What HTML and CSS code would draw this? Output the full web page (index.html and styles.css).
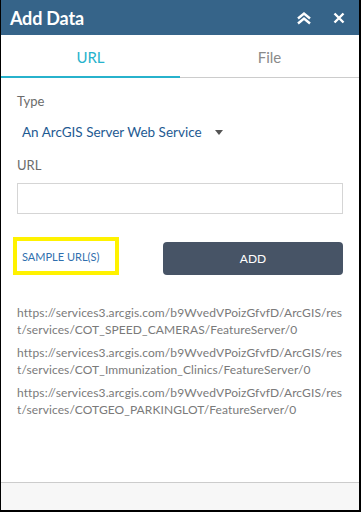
FILE: index.html
```html
<!DOCTYPE html>
<html>
<head>
<meta charset="utf-8">
<link rel="stylesheet" href="styles.css">
</head>
<body>
<div class="panel">
  <div class="header">
    <div class="title">Add Data</div>
    <div class="actions">
      <svg class="ico" width="16" height="14" viewBox="0 0 16 14"><path d="M2 7.5 L8 2.5 L14 7.5 M2 12.5 L8 7.5 L14 12.5" fill="none" stroke="#fff" stroke-width="2.4"/></svg>
      <svg class="ico" width="12" height="12" viewBox="0 0 12 12"><path d="M1.5 1.5 L10.5 10.5 M10.5 1.5 L1.5 10.5" fill="none" stroke="#fff" stroke-width="2.4"/></svg>
    </div>
  </div>
  <div class="tabs">
    <div class="tab active">URL</div>
    <div class="tab">File</div>
  </div>
  <div class="content">
    <div class="label">Type</div>
    <div class="select">An ArcGIS Server Web Service <span class="caret"></span></div>
    <div class="label">URL</div>
    <div class="input"></div>
    <div class="buttons">
      <div class="sample">SAMPLE URL(S)</div>
      <div class="add">ADD</div>
    </div>
    <div class="urls">
      <div class="url">https://services3.arcgis.com/b9WvedVPoizGfvfD/ArcGIS/rest/services/COT_SPEED_CAMERAS/FeatureServer/0</div>
      <div class="url">https://services3.arcgis.com/b9WvedVPoizGfvfD/ArcGIS/rest/services/COT_Immunization_Clinics/FeatureServer/0</div>
      <div class="url">https://services3.arcgis.com/b9WvedVPoizGfvfD/ArcGIS/rest/services/COTGEO_PARKINGLOT/FeatureServer/0</div>
    </div>
  </div>
  <div class="footer"></div>
</div>
</body>
</html>
```
FILE: styles.css
```css
* { box-sizing: border-box; }
html, body { margin: 0; padding: 0; background: #fff; }
body { font-family: Lato, "Open Sans", sans-serif; }
.panel {
  width: 361px; height: 512px;
  border-left: 1px solid #000; border-right: 2px solid #000; border-bottom: 2px solid #000;
  display: flex; flex-direction: column;
}
.header {
  height: 35px; background: #366489; color: #fff;
  display: flex; align-items: center; justify-content: space-between;
  padding: 0 14px 0 9px;
}
.title { font-size: 18px; font-weight: 700; letter-spacing: -0.2px; }
.actions { display: flex; align-items: center; gap: 21px; }
.ico { display: block; }
.tabs { display: flex; height: 43px; }
.tab {
  flex: 1; display: flex; align-items: center; justify-content: center;
  font-size: 15px; color: #8a8a8a; border-bottom: 1px solid #ccc; padding-top: 2px;
}
.tab.active { color: #27b2cc; border-bottom: 2px solid #27b2cc; }
.content { flex: 1; padding: 15px 16px 0 16px; }
.label { font-size: 13px; color: #6b6b6b; line-height: 16px; }
.select {
  font-size: 13.5px; color: #1e5a92; margin: 14px 0 16px 5px; line-height: 18px;
  display: flex; align-items: center;
}
.caret {
  display: inline-block; width: 0; height: 0; margin-left: 13px;
  border-left: 4.5px solid transparent; border-right: 4.5px solid transparent; border-top: 5px solid #555;
}
.input { height: 31px; border: 1px solid #d5d5d5; margin-top: 10px; }
.buttons { display: flex; justify-content: space-between; align-items: center; margin-top: 23px; margin-left: -4px; }
.sample {
  width: 106px; height: 38px; border: 4px solid #fff200; color: #2f6fae;
  font-size: 11px; display: flex; align-items: center; padding-left: 5px; padding-top: 1px;
}
.add {
  width: 180px; height: 33px; background: #475466; border-radius: 4px; color: #fff;
  font-size: 12px; display: flex; align-items: center; justify-content: center; margin-top: 5px;
}
.urls { margin-top: 29px; }
.url {
  font-size: 12px; line-height: 17px; color: #7a7a7a; word-break: break-all; margin-bottom: 6px;
  letter-spacing: 0.1px;
}
.footer { height: 28px; background: #f7f7f7; border-top: 1px solid #ccc; }
```
